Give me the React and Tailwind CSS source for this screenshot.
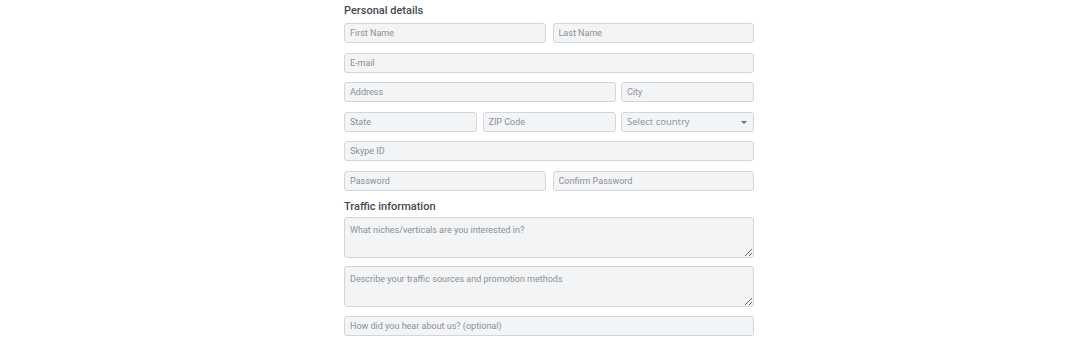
import { useState } from 'react';

const field =
    'block h-[20px] w-full rounded-[3px] border border-[#d3d6d9] bg-[#f3f4f5] px-[5px] text-[9px] text-[#3d4349] outline-none placeholder:text-[#8b9096]';

const area =
    'block h-[41px] w-full rounded-[3px] border border-[#d3d6d9] bg-[#f3f4f5] px-[5px] pt-[6px] text-[9px] leading-[12px] text-[#3d4349] outline-none placeholder:text-[#8b9096]';

function Heading({ children }) {
    return (
        <h2 className="text-[11px] font-medium leading-[14px] text-[#444a50]">
            {children}
        </h2>
    );
}

export default function App() {
    const [country, setCountry] = useState('');

    return (
        <div
            className="min-h-[345px] w-full bg-white pl-[344px]"
            style={{ fontFamily: 'Roboto, "Liberation Sans", sans-serif' }}
        >
            <div className="flex w-[410px] flex-col">
                <div className="pt-[4px] pb-[5px]">
                    <Heading>Personal details</Heading>
                </div>

                <div className="flex flex-col gap-[9.5px]">
                    <div className="grid grid-cols-2 gap-[7px]">
                        <input className={field} placeholder="First Name" />
                        <input className={field} placeholder="Last Name" />
                    </div>
                    <input className={field} placeholder="E-mail" />
                    <div className="grid grid-cols-3 gap-[5.5px]">
                        <input className={`${field} col-span-2`} placeholder="Address" />
                        <input className={field} placeholder="City" />
                    </div>
                    <div className="grid grid-cols-3 gap-[5.5px]">
                        <input className={field} placeholder="State" />
                        <input className={field} placeholder="ZIP Code" />
                        <div className="relative h-[20px]">
                            <select
                                value={country}
                                onChange={(e) => setCountry(e.target.value)}
                                className={`${field} appearance-none py-0 leading-[18px] text-[#8b9096]`}
                                style={{ fontFamily: '"Open Sans", sans-serif', fontSize: '9.5px' }}
                            >
                                <option value="">Select country</option>
                                <option value="us">United States</option>
                                <option value="uk">United Kingdom</option>
                            </select>
                            {/* caret */}
                            <span className="pointer-events-none absolute top-[9px] right-[7px] h-0 w-0 border-x-[3px] border-t-[3px] border-x-transparent border-t-[#6b7075]" />
                        </div>
                    </div>
                    <input className={field} placeholder="Skype ID" />
                    <div className="grid grid-cols-2 gap-[7px]">
                        <input className={field} type="password" placeholder="Password" />
                        <input className={field} type="password" placeholder="Confirm Password" />
                    </div>
                </div>

                <div className="pt-[9px] pb-[3px]">
                    <Heading>Traffic information</Heading>
                </div>

                <div className="flex flex-col gap-[8.5px]">
                    <textarea className={area} placeholder="What niches/verticals are you interested in?" />
                    <textarea className={area} placeholder="Describe your traffic sources and promotion methods" />
                    <input className={field} placeholder="How did you hear about us? (optional)" />
                </div>
            </div>
        </div>
    );
}
